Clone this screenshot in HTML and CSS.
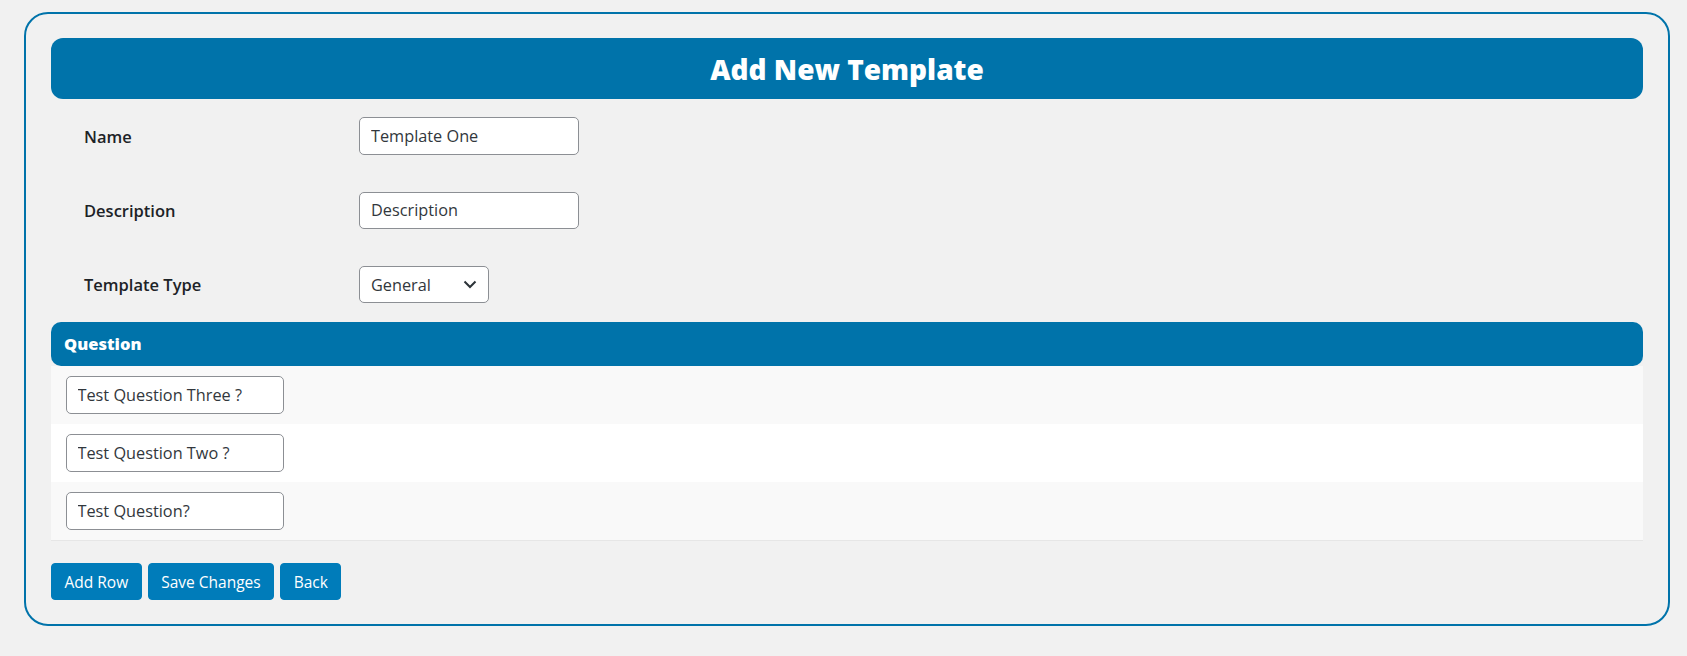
FILE: index.html
```html
<!DOCTYPE html>
<html lang="en">
<head>
<meta charset="utf-8">
<title>Add New Template</title>
<link rel="stylesheet" href="styles.css">
</head>
<body>
<div class="wrap">
  <div class="title-bar"><h1 class="title">Add New Template</h1></div>
  <div class="form">
    <div class="form-row">
      <label class="form-label">Name</label>
      <div class="field"><input class="text-input" type="text" value="Template One"></div>
    </div>
    <div class="form-row">
      <label class="form-label">Description</label>
      <div class="field"><input class="text-input placeholder" type="text" placeholder="Description"></div>
    </div>
    <div class="form-row">
      <label class="form-label">Template Type</label>
      <div class="field">
        <div class="select">
          <span class="select-value">General</span>
          <svg class="chevron" width="14" height="9" viewBox="0 0 14 9"><polyline points="1.5,1.5 7,7 12.5,1.5" fill="none" stroke="#2c3338" stroke-width="2"/></svg>
        </div>
      </div>
    </div>
  </div>
  <div class="q-table">
    <div class="q-head">Question</div>
    <div class="q-row odd"><input class="text-input q-input" type="text" value="Test Question Three ?"></div>
    <div class="q-row"><input class="text-input q-input" type="text" value="Test Question Two ?"></div>
    <div class="q-row odd"><input class="text-input q-input" type="text" value="Test Question?"></div>
  </div>
  <div class="actions">
    <button class="btn">Add Row</button>
    <button class="btn">Save Changes</button>
    <button class="btn">Back</button>
  </div>
</div>
</body>
</html>
```
FILE: styles.css
```css
html, body {
  margin: 0;
  padding: 0;
  background: #f1f1f1;
}
body {
  font-family: "Open Sans", "Noto Sans", sans-serif;
  color: #1d2327;
}
.wrap {
  box-sizing: border-box;
  width: 1646px;
  margin: 12px 0 0 24px;
  border: 2px solid #0073aa;
  border-radius: 24px;
  padding: 24px 25px 24px 25px;
}
.title-bar {
  height: 61px;
  background: #0073aa;
  border-radius: 12px;
  display: flex;
  align-items: center;
  justify-content: center;
}
.title {
  margin: 0;
  color: #fff;
  font-size: 28px;
  font-weight: 800;
  line-height: 1;
}
.form {
  padding-left: 33px;
}
.form-row {
  display: flex;
  align-items: center;
  padding: 18.4px 0;
}
.form-label {
  width: 275px;
  font-size: 16.5px;
  font-weight: 600;
  color: #1d2327;
}
.text-input {
  box-sizing: border-box;
  width: 220px;
  height: 37.5px;
  border: 1px solid #8c8f94;
  border-radius: 5px;
  background: #fff;
  padding: 0 11px;
  font-family: "Open Sans", "Noto Sans", sans-serif;
  font-size: 16.3px;
  color: #32373c;
  outline: none;
}
.text-input::placeholder {
  color: #32373c;
  opacity: 1;
}
.select {
  box-sizing: border-box;
  width: 130px;
  height: 37.5px;
  border: 1px solid #8c8f94;
  border-radius: 5px;
  background: #fff;
  padding: 0 11px 0 11px;
  display: flex;
  align-items: center;
  justify-content: space-between;
  font-size: 16.3px;
  color: #32373c;
}
.chevron {
  display: block;
}
.q-table {
  border-bottom: 1px solid #e6e6e6;
}
.q-head {
  height: 44px;
  background: #0073aa;
  border-radius: 10px;
  color: #fff;
  font-size: 16.5px;
  font-weight: 800;
  display: flex;
  align-items: center;
  padding-left: 13px;
}
.q-row {
  background: #fff;
  padding: 10.25px 14.5px;
}
.q-row.odd {
  background: #f9f9f9;
}
.q-input {
  width: 218px;
  display: block;
}
.actions {
  display: flex;
  gap: 6px;
  margin-top: 22px;
}
.btn {
  box-sizing: border-box;
  height: 37.5px;
  padding: 0 12.5px;
  border: 1.25px solid #007cba;
  border-radius: 4px;
  background: #007cba;
  color: #fff;
  font-family: "Open Sans", "Noto Sans", sans-serif;
  font-size: 15.5px;
  cursor: pointer;
}
```
